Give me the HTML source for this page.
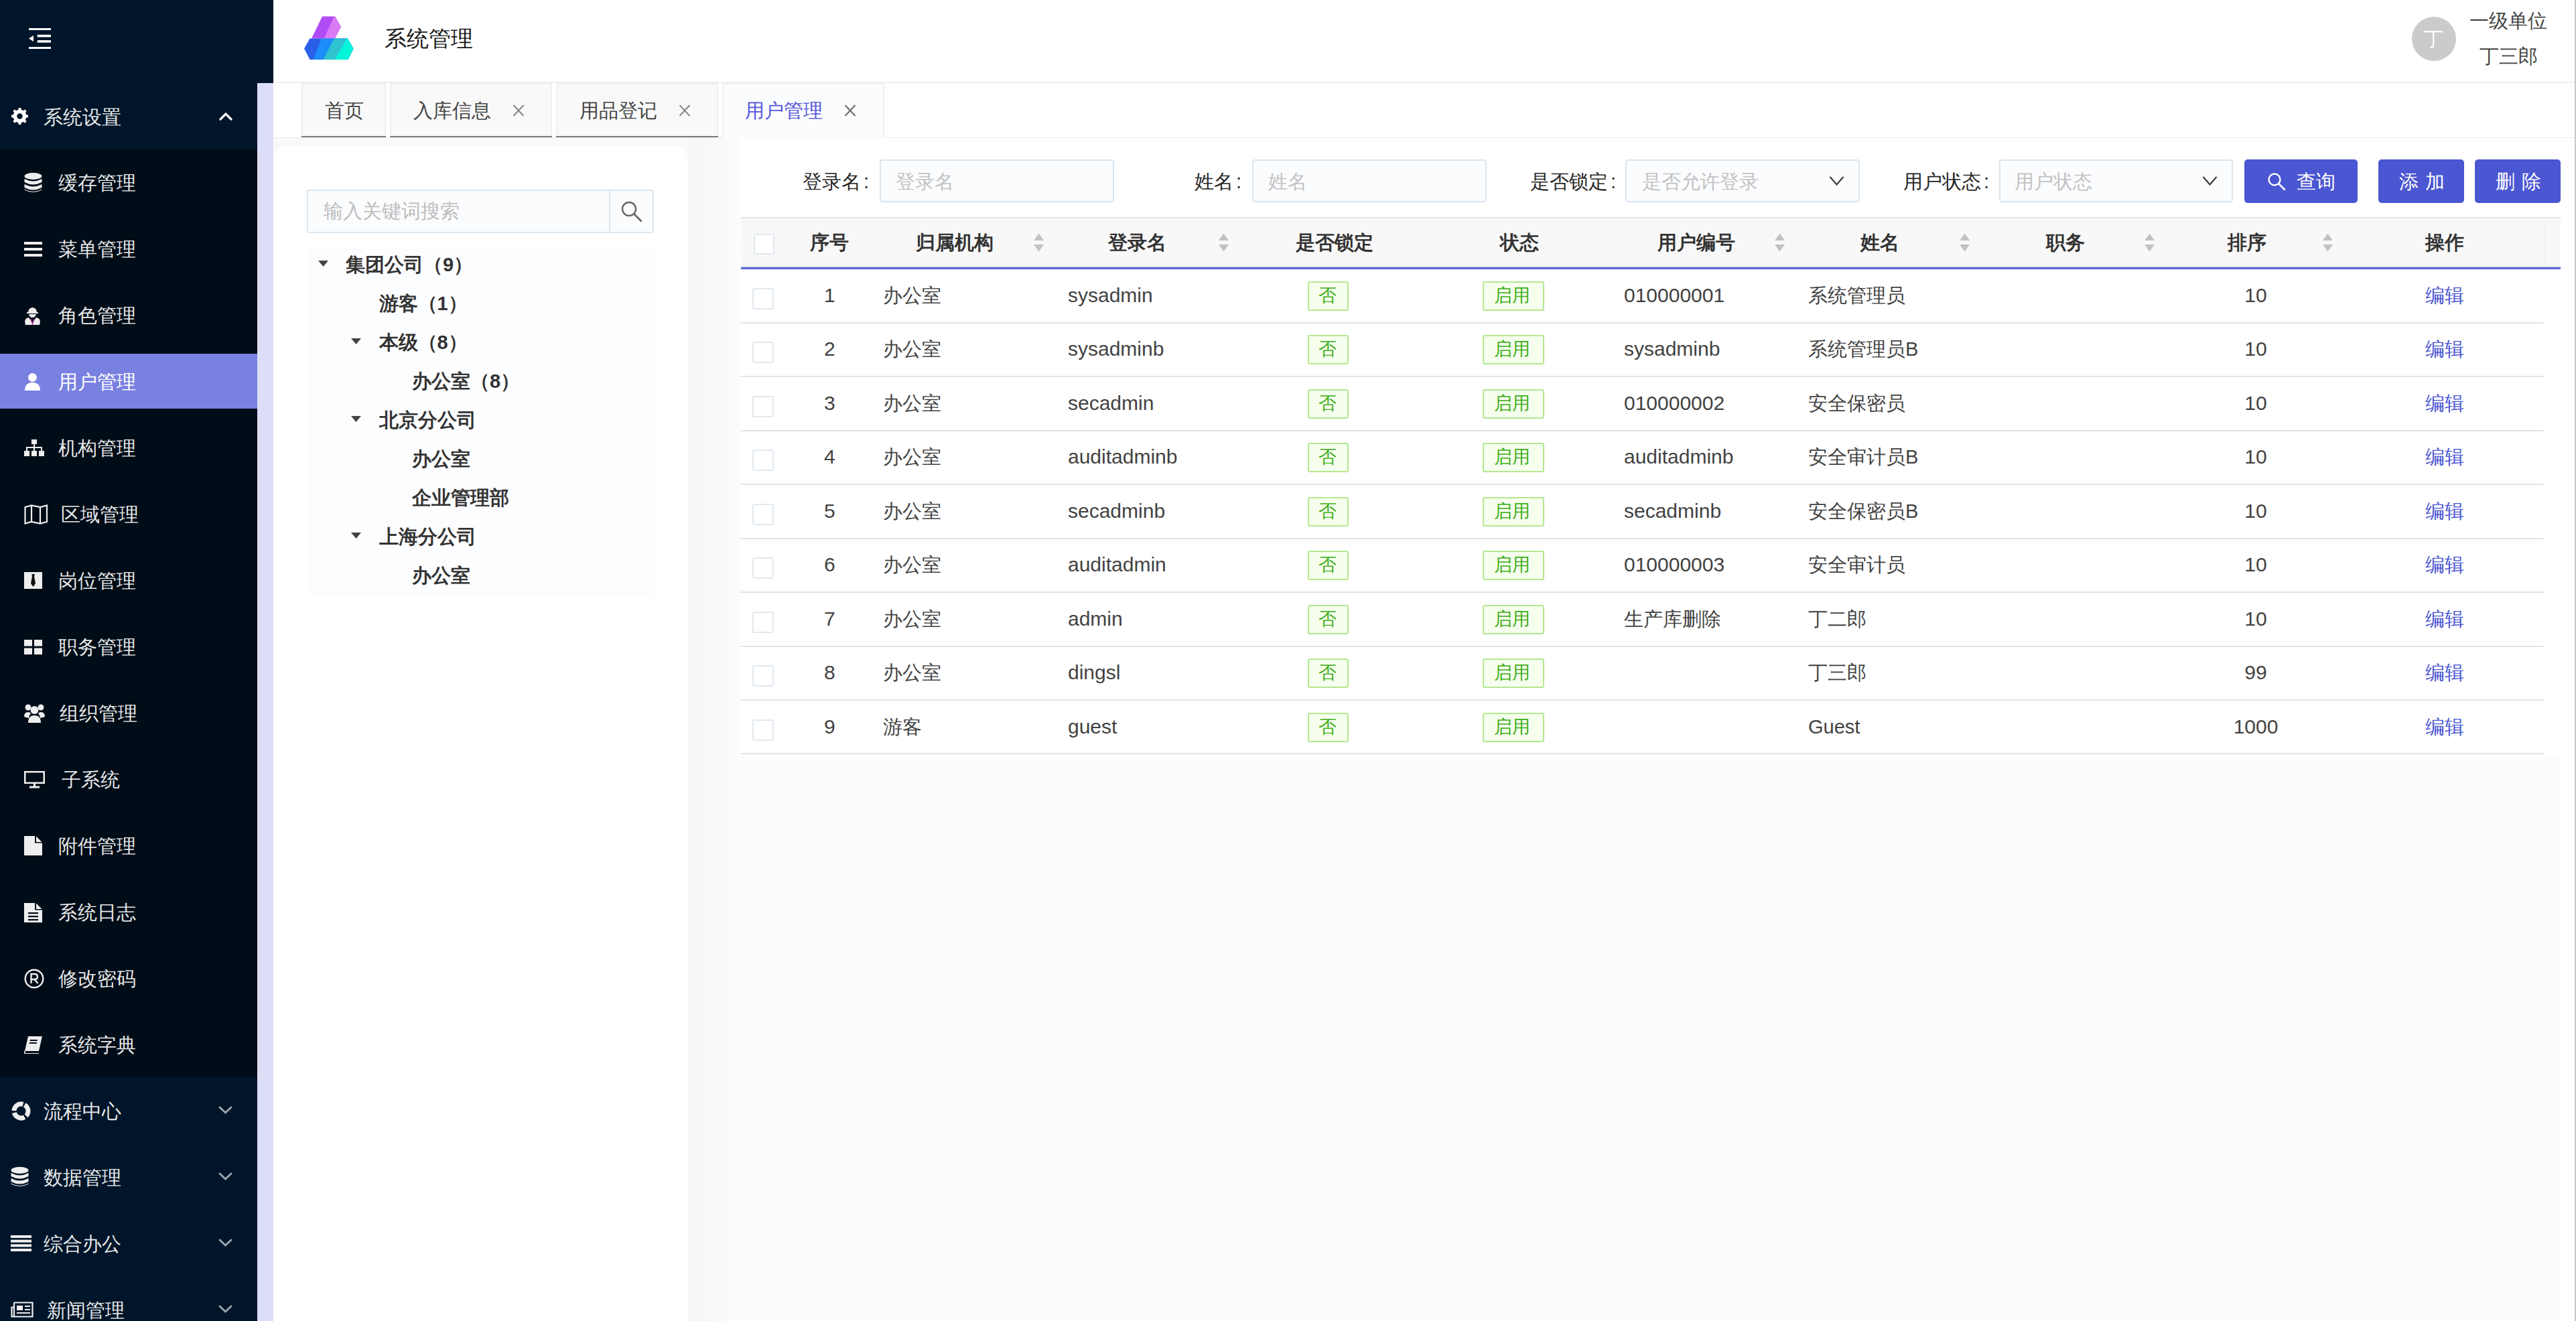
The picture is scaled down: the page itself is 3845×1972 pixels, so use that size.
<!DOCTYPE html>
<html><head><meta charset="utf-8"><title>系统管理</title>
<style>
html,body{margin:0;padding:0;width:3845px;height:1972px;overflow:hidden;background:#fff;font-family:"Liberation Sans",sans-serif;}
.a{position:absolute;display:block}
.t{position:absolute;white-space:nowrap}
</style></head><body>
<div class="a" style="left:0px;top:0px;width:408px;height:1972px;background:#001529"></div>
<div class="a" style="left:0px;top:223px;width:384px;height:1385px;background:#000c17"></div>
<div class="a" style="left:384px;top:124px;width:24px;height:1848px;background:#dcddf6"></div>
<div class="a" style="left:0px;top:528px;width:384px;height:82px;background:#7880e0"></div>
<div class="a" style="left:408px;top:0px;width:3437px;height:122px;background:#fff"></div>
<div class="a" style="left:409px;top:122px;width:3436px;height:2px;background:#efefef"></div>
<div class="a" style="left:409px;top:126px;width:3436px;height:80px;background:#fff"></div>
<div class="a" style="left:409px;top:205px;width:3436px;height:1px;background:#e8e8e8"></div>
<div class="a" style="left:408px;top:206px;width:3437px;height:1766px;background:#f9f9f9"></div>
<div class="a" style="left:408px;top:217px;width:619px;height:1755px;background:#fff;border-radius:22px 22px 0 0"></div>
<div class="a" style="left:1027px;top:206px;width:79px;height:1766px;background:linear-gradient(to right,#f6f6f6,#fcfcfc)"></div>
<div class="a" style="left:1106px;top:206px;width:2737px;height:1766px;background:#fbfcfe"></div>
<div class="a" style="left:1106px;top:206px;width:2737px;height:118px;background:#fff"></div>
<div class="a" style="left:3822px;top:206px;width:21px;height:1766px;background:#fff"></div>
<div class="a" style="left:3843px;top:0px;width:2px;height:1972px;background:#c9c9c9"></div>
<svg class="a" style="left:43px;top:42px" width="34" height="31" viewBox="0 0 34 31"><g fill="#fff"><rect x="0" y="0" width="33" height="3"/><rect x="12.7" y="9.8" width="20.3" height="3.6"/><rect x="12.7" y="18" width="20.3" height="3.6"/><rect x="0" y="28" width="33" height="3"/><path d="M0 15.5 L7 11 L7 20 Z"/></g></svg>
<div class="t" style="left:65px;top:155.0px;font-size:29px;line-height:40px;color:rgba(255,255,255,0.92);font-weight:normal;">系统设置</div>
<svg class="a" style="left:17px;top:161px" width="25" height="25" viewBox="0 0 25 25"><g fill="#fff"><path d="M12.5 0 l2.6 0 l0.8 3.4 a9.5 9.5 0 0 1 2.9 1.7 l3.3-1.1 l1.3 2.3 l-2.5 2.4 a9.5 9.5 0 0 1 0 3.4 l2.5 2.4 l-1.3 2.3 l-3.3-1.1 a9.5 9.5 0 0 1-2.9 1.7 l-0.8 3.4 l-2.6 0 z" transform="translate(-1.3 0)"/></g><circle cx="12.5" cy="12.5" r="10" fill="#fff"/><g fill="#fff"><rect x="10.5" y="0" width="4" height="25"/><rect x="0" y="10.5" width="25" height="4"/><rect x="10.5" y="0" width="4" height="25" transform="rotate(45 12.5 12.5)"/><rect x="10.5" y="0" width="4" height="25" transform="rotate(-45 12.5 12.5)"/></g><circle cx="12.5" cy="12.5" r="4.2" fill="#001529"/></svg>
<svg class="a" style="left:327px;top:167px" width="20" height="14" viewBox="0 0 20 14"><path d="M2 11 L10 3 L18 11" stroke="#fff" stroke-width="3.2" fill="none" stroke-linecap="round"/></svg>
<div class="t" style="left:87px;top:253.0px;font-size:29px;line-height:40px;color:rgba(255,255,255,0.92);font-weight:normal;">缓存管理</div>
<div class="t" style="left:87px;top:352.0px;font-size:29px;line-height:40px;color:rgba(255,255,255,0.92);font-weight:normal;">菜单管理</div>
<div class="t" style="left:87px;top:451.0px;font-size:29px;line-height:40px;color:rgba(255,255,255,0.92);font-weight:normal;">角色管理</div>
<div class="t" style="left:87px;top:550.0px;font-size:29px;line-height:40px;color:#fff;font-weight:normal;">用户管理</div>
<div class="t" style="left:87px;top:649.0px;font-size:29px;line-height:40px;color:rgba(255,255,255,0.92);font-weight:normal;">机构管理</div>
<div class="t" style="left:91px;top:748.0px;font-size:29px;line-height:40px;color:rgba(255,255,255,0.92);font-weight:normal;">区域管理</div>
<div class="t" style="left:87px;top:847.0px;font-size:29px;line-height:40px;color:rgba(255,255,255,0.92);font-weight:normal;">岗位管理</div>
<div class="t" style="left:87px;top:946.0px;font-size:29px;line-height:40px;color:rgba(255,255,255,0.92);font-weight:normal;">职务管理</div>
<div class="t" style="left:89px;top:1045.0px;font-size:29px;line-height:40px;color:rgba(255,255,255,0.92);font-weight:normal;">组织管理</div>
<div class="t" style="left:92px;top:1144.0px;font-size:29px;line-height:40px;color:rgba(255,255,255,0.92);font-weight:normal;">子系统</div>
<div class="t" style="left:87px;top:1243.0px;font-size:29px;line-height:40px;color:rgba(255,255,255,0.92);font-weight:normal;">附件管理</div>
<div class="t" style="left:87px;top:1342.0px;font-size:29px;line-height:40px;color:rgba(255,255,255,0.92);font-weight:normal;">系统日志</div>
<div class="t" style="left:87px;top:1441.0px;font-size:29px;line-height:40px;color:rgba(255,255,255,0.92);font-weight:normal;">修改密码</div>
<div class="t" style="left:87px;top:1540.0px;font-size:29px;line-height:40px;color:rgba(255,255,255,0.92);font-weight:normal;">系统字典</div>
<svg class="a" style="left:36px;top:258px" width="27" height="30" viewBox="0 0 27 30"><g fill="#eee"><ellipse cx="13.5" cy="5" rx="13" ry="5"/><path d="M0.5 9 q13 7 26 0 v5 q-13 7 -26 0z"/><path d="M0.5 17 q13 7 26 0 v5 q-13 7 -26 0z"/><path d="M0.5 24.5 q13 7 26 0 v1 q-13 7 -26 0z"/></g></svg>
<svg class="a" style="left:36px;top:361px" width="27" height="22" viewBox="0 0 27 22"><g fill="#eee"><rect x="0" y="0" width="27" height="4"/><rect x="0" y="9" width="27" height="4"/><rect x="0" y="18" width="27" height="4"/></g></svg>
<svg class="a" style="left:36px;top:457px" width="25" height="28" viewBox="0 0 25 28"><g fill="#eee"><path d="M7 5 q5.5-6 11 0 l1 4 h-13z"/><rect x="4" y="9" width="17" height="2"/><path d="M7 12 h11 q-1 5 -5.5 5 q-4.5 0 -5.5 -5z"/><path d="M2 28 q-3 -10 5 -11 l5.5 8 l5.5 -8 q8 1 5 11z"/></g><path d="M10 19 l2.5 8 l2.5 -8" stroke="#b0309a" stroke-width="1.3" fill="none"/></svg>
<svg class="a" style="left:37px;top:557px" width="23" height="26" viewBox="0 0 23 26"><g fill="#fff"><circle cx="11.5" cy="6.5" r="6.5"/><path d="M0 26 q0 -12 11.5 -12 q11.5 0 11.5 12z"/></g></svg>
<svg class="a" style="left:36px;top:656px" width="30" height="25" viewBox="0 0 30 25"><g fill="#eee"><rect x="11" y="0" width="8" height="7"/><rect x="14" y="7" width="2" height="5"/><rect x="3" y="11" width="24" height="2"/><rect x="3" y="11" width="2" height="6"/><rect x="25" y="11" width="2" height="6"/><rect x="14" y="11" width="2" height="6"/><rect x="0" y="17" width="8" height="8"/><rect x="11" y="17" width="8" height="8"/><rect x="22" y="17" width="8" height="8"/></g></svg>
<svg class="a" style="left:36px;top:753px" width="36" height="30" viewBox="0 0 36 30"><g fill="none" stroke="#eee" stroke-width="2.2"><path d="M1.5 4 L11 1.5 L24 4 L34 1.5 V26 L24 28.5 L11 26 L1.5 28.5 Z"/><path d="M11 1.5 V26 M24 4 V28.5"/></g></svg>
<svg class="a" style="left:36px;top:854px" width="27" height="25" viewBox="0 0 27 25"><rect x="0" y="0" width="27" height="25" fill="#eee"/><path d="M11 3 h5 l-1 3 l2 11 l-3.5 5 l-3.5 -5 l2 -11z" fill="#111"/></svg>
<svg class="a" style="left:36px;top:955px" width="27" height="22" viewBox="0 0 27 22"><g fill="#eee"><rect x="0" y="0" width="12" height="9.5"/><rect x="15" y="0" width="12" height="9.5"/><rect x="0" y="12.5" width="12" height="9.5"/><rect x="15" y="12.5" width="12" height="9.5"/></g></svg>
<svg class="a" style="left:36px;top:1051px" width="31" height="28" viewBox="0 0 31 28"><g fill="#eee"><circle cx="6" cy="5" r="4.5"/><circle cx="25" cy="5" r="4.5"/><circle cx="15.5" cy="9" r="6"/><path d="M0 19 q0-7 6-7 q3 0 4 2 q-3 3 -3 7z"/><path d="M31 19 q0-7 -6-7 q-3 0 -4 2 q3 3 3 7z"/><path d="M6 28 q0 -11 9.5 -11 q9.5 0 9.5 11z"/></g></svg>
<svg class="a" style="left:36px;top:1151px" width="31" height="26" viewBox="0 0 31 26"><g fill="#eee"><path d="M0 0 h31 v19 h-31z M2.5 2.5 v14 h26 v-14z" fill-rule="evenodd"/><rect x="14" y="19" width="3" height="4"/><rect x="8" y="22.5" width="15" height="3"/></g></svg>
<svg class="a" style="left:36px;top:1248px" width="27" height="29" viewBox="0 0 27 29"><path d="M0 0 H16 V10.5 H27 V29 H0 Z" fill="#eee"/><path d="M18 0.5 L26.5 9 H18 Z" fill="#eee"/></svg>
<svg class="a" style="left:36px;top:1348px" width="27" height="29" viewBox="0 0 27 29"><path d="M0 0 H16 V10.5 H27 V29 H0 Z" fill="#eee"/><path d="M18 0.5 L26.5 9 H18 Z" fill="#eee"/><g fill="#000c17"><rect x="6" y="14" width="15" height="2.2"/><rect x="6" y="19" width="15" height="2.2"/><rect x="6" y="24" width="15" height="2.2"/></g></svg>
<svg class="a" style="left:36px;top:1446px" width="30" height="30" viewBox="0 0 30 30"><circle cx="15" cy="15" r="13.3" stroke="#eee" stroke-width="2.4" fill="none"/><path d="M10.5 22 V8 h5 q4.5 0 4.5 4 q0 4 -4.5 4 h-5 M15.5 16 L20.5 22" stroke="#eee" stroke-width="2.4" fill="none"/></svg>
<svg class="a" style="left:36px;top:1547px" width="27" height="26" viewBox="0 0 27 26"><path d="M6 0 h21 l-5 22 h-21 z" fill="#eee"/><path d="M1 22 q-2 4 3 4 h18" stroke="#eee" stroke-width="2" fill="none"/><g fill="#000c17"><rect x="10" y="5" width="11" height="2" transform="skewX(-12)"/><rect x="10" y="9" width="11" height="2" transform="skewX(-12)"/></g></svg>
<div class="t" style="left:65px;top:1639.0px;font-size:29px;line-height:40px;color:rgba(255,255,255,0.92);font-weight:normal;">流程中心</div>
<svg class="a" style="left:326px;top:1650px" width="21" height="14" viewBox="0 0 21 14"><path d="M2 3 L10.5 11 L19 3" stroke="#9aa3ad" stroke-width="3" fill="none" stroke-linecap="round"/></svg>
<div class="t" style="left:65px;top:1738.0px;font-size:29px;line-height:40px;color:rgba(255,255,255,0.92);font-weight:normal;">数据管理</div>
<svg class="a" style="left:326px;top:1749px" width="21" height="14" viewBox="0 0 21 14"><path d="M2 3 L10.5 11 L19 3" stroke="#9aa3ad" stroke-width="3" fill="none" stroke-linecap="round"/></svg>
<div class="t" style="left:65px;top:1837.0px;font-size:29px;line-height:40px;color:rgba(255,255,255,0.92);font-weight:normal;">综合办公</div>
<svg class="a" style="left:326px;top:1848px" width="21" height="14" viewBox="0 0 21 14"><path d="M2 3 L10.5 11 L19 3" stroke="#9aa3ad" stroke-width="3" fill="none" stroke-linecap="round"/></svg>
<div class="t" style="left:70px;top:1936.0px;font-size:29px;line-height:40px;color:rgba(255,255,255,0.92);font-weight:normal;">新闻管理</div>
<svg class="a" style="left:326px;top:1947px" width="21" height="14" viewBox="0 0 21 14"><path d="M2 3 L10.5 11 L19 3" stroke="#9aa3ad" stroke-width="3" fill="none" stroke-linecap="round"/></svg>
<svg class="a" style="left:16px;top:1644px" width="31" height="29" viewBox="0 0 31 29"><circle cx="15.5" cy="14.5" r="10.5" stroke="#eee" stroke-width="7" fill="none" stroke-dasharray="19 3" transform="rotate(-60 15.5 14.5)"/></svg>
<svg class="a" style="left:16px;top:1742px" width="27" height="30" viewBox="0 0 27 30"><g fill="#eee"><ellipse cx="13.5" cy="5" rx="13" ry="5"/><path d="M0.5 9 q13 7 26 0 v5 q-13 7 -26 0z"/><path d="M0.5 17 q13 7 26 0 v5 q-13 7 -26 0z"/><path d="M0.5 24.5 q13 7 26 0 v1 q-13 7 -26 0z"/></g></svg>
<svg class="a" style="left:16px;top:1844px" width="31" height="24" viewBox="0 0 31 24"><g fill="#eee"><rect x="0" y="0" width="31" height="4"/><rect x="0" y="6.7" width="31" height="4"/><rect x="0" y="13.4" width="31" height="4"/><rect x="0" y="20" width="31" height="4"/></g></svg>
<svg class="a" style="left:16px;top:1943px" width="34" height="24" viewBox="0 0 34 24"><g fill="none" stroke="#eee" stroke-width="2.2"><path d="M5 1.5 h27.5 v21 h-31 v-14 h3.5"/><path d="M5 1.5 v21"/></g><g fill="#eee"><rect x="9" y="6" width="9" height="7"/><rect x="21" y="6" width="8" height="2"/><rect x="21" y="11" width="8" height="2"/><rect x="9" y="16" width="20" height="2"/></g></svg>
<svg class="a" style="left:454px;top:24px" width="75" height="66" viewBox="0 0 75 66"><defs><clipPath id="cpU"><path d="M11 33.5 L27 0.5 H46 L55 16 L46 33.5 Z"/></clipPath><clipPath id="cpL"><path d="M0 48.5 L8.5 33.5 H65 L73.5 48.5 L65.5 65 H8.5 Z"/></clipPath></defs>
<g clip-path="url(#cpU)"><rect x="0" y="0" width="80" height="40" fill="#b04cf6"/><path d="M44.75 0.5 L29.75 33.5 H80 V0 Z" fill="#dc7bf6"/></g>
<g clip-path="url(#cpL)"><rect x="-5" y="30" width="90" height="40" fill="#2a5fe8"/><path d="M26 33.5 L13.5 65 H90 V30 Z" fill="#1b8cf8"/><path d="M44.75 33.5 L28.5 65 H90 V30 Z" fill="#2fc3d0"/><path d="M63.5 33.5 L46 65 H90 V30 Z" fill="#03f5da"/></g></svg>
<div class="t" style="left:574px;top:36.0px;font-size:33px;line-height:44px;color:#1a1a1a;font-weight:normal;">系统管理</div>
<div class="a" style="left:3600px;top:25px;width:66px;height:66px;background:#cbcbcb;border-radius:50%"></div>
<div class="t" style="left:3618px;top:38.0px;font-size:29px;line-height:40px;color:#fff;font-weight:normal;">丁</div>
<div class="t" style="left:3686px;top:11.0px;font-size:29px;line-height:40px;color:#444;font-weight:normal;">一级单位</div>
<div class="t" style="left:3701px;top:64.0px;font-size:29px;line-height:40px;color:#444;font-weight:normal;">丁三郎</div>
<div class="a" style="left:450px;top:124px;width:126px;height:81px;background:#f9f9f9;box-sizing:border-box;border:2px solid #efefef;border-bottom:none"></div>
<div class="a" style="left:450px;top:203px;width:126px;height:2px;background:#7a7a7a"></div>
<div class="a" style="left:582px;top:124px;width:242px;height:81px;background:#f9f9f9;box-sizing:border-box;border:2px solid #efefef;border-bottom:none"></div>
<div class="a" style="left:582px;top:203px;width:242px;height:2px;background:#7a7a7a"></div>
<div class="a" style="left:830px;top:124px;width:242px;height:81px;background:#f9f9f9;box-sizing:border-box;border:2px solid #efefef;border-bottom:none"></div>
<div class="a" style="left:830px;top:203px;width:242px;height:2px;background:#7a7a7a"></div>
<div class="a" style="left:1078px;top:124px;width:242px;height:82px;background:#fbfcfe;box-sizing:border-box;border:2px solid #efefef;border-bottom:none"></div>
<div class="t" style="left:485px;top:145.0px;font-size:29px;line-height:40px;color:#444;font-weight:normal;">首页</div>
<div class="t" style="left:617px;top:145.0px;font-size:29px;line-height:40px;color:#444;font-weight:normal;">入库信息</div>
<div class="t" style="left:865px;top:145.0px;font-size:29px;line-height:40px;color:#444;font-weight:normal;">用品登记</div>
<div class="t" style="left:1112px;top:145.0px;font-size:29px;line-height:40px;color:#5458d8;font-weight:normal;">用户管理</div>
<svg class="a" style="left:765px;top:155px" width="18" height="20" viewBox="0 0 18 20"><path d="M1.5 2 L16.5 18 M16.5 2 L1.5 18" stroke="#8c8c8c" stroke-width="2.2"/></svg>
<svg class="a" style="left:1013px;top:155px" width="18" height="20" viewBox="0 0 18 20"><path d="M1.5 2 L16.5 18 M16.5 2 L1.5 18" stroke="#8c8c8c" stroke-width="2.2"/></svg>
<svg class="a" style="left:1260px;top:155px" width="18" height="20" viewBox="0 0 18 20"><path d="M1.5 2 L16.5 18 M16.5 2 L1.5 18" stroke="#707070" stroke-width="2.2"/></svg>
<div class="a" style="left:458px;top:283px;width:518px;height:65px;background:#fbfcfe;box-sizing:border-box;border:2px solid #dbe5ee;border-radius:4px"></div>
<div class="a" style="left:909px;top:284px;width:2px;height:63px;background:#dbe5ee"></div>
<div class="t" style="left:483px;top:295.0px;font-size:29px;line-height:40px;color:#bdbdbd;font-weight:normal;">输入关键词搜索</div>
<svg class="a" style="left:926px;top:299px" width="34" height="34" viewBox="0 0 34 34"><circle cx="13" cy="13" r="10" stroke="#666" stroke-width="2.4" fill="none"/><path d="M20.5 20.5 L31 31" stroke="#666" stroke-width="2.6" stroke-linecap="round"/></svg>
<div class="a" style="left:458px;top:369px;width:520px;height:520px;background:#fcfdff"></div>
<div class="t" style="left:516.0px;top:374.5px;font-size:29px;line-height:40px;color:#333;font-weight:bold;">集团公司（9）</div>
<svg class="a" style="left:475px;top:389px" width="15" height="10" viewBox="0 0 15 10"><path d="M0 0 H15 L7.5 9 Z" fill="#444"/></svg>
<div class="t" style="left:565.5px;top:432.5px;font-size:29px;line-height:40px;color:#333;font-weight:bold;">游客（1）</div>
<div class="t" style="left:565.5px;top:490.5px;font-size:29px;line-height:40px;color:#333;font-weight:bold;">本级（8）</div>
<svg class="a" style="left:524px;top:505px" width="15" height="10" viewBox="0 0 15 10"><path d="M0 0 H15 L7.5 9 Z" fill="#444"/></svg>
<div class="t" style="left:615.0px;top:548.5px;font-size:29px;line-height:40px;color:#333;font-weight:bold;">办公室（8）</div>
<div class="t" style="left:565.5px;top:606.5px;font-size:29px;line-height:40px;color:#333;font-weight:bold;">北京分公司</div>
<svg class="a" style="left:524px;top:621px" width="15" height="10" viewBox="0 0 15 10"><path d="M0 0 H15 L7.5 9 Z" fill="#444"/></svg>
<div class="t" style="left:615.0px;top:664.5px;font-size:29px;line-height:40px;color:#333;font-weight:bold;">办公室</div>
<div class="t" style="left:615.0px;top:722.5px;font-size:29px;line-height:40px;color:#333;font-weight:bold;">企业管理部</div>
<div class="t" style="left:565.5px;top:780.5px;font-size:29px;line-height:40px;color:#333;font-weight:bold;">上海分公司</div>
<svg class="a" style="left:524px;top:795px" width="15" height="10" viewBox="0 0 15 10"><path d="M0 0 H15 L7.5 9 Z" fill="#444"/></svg>
<div class="t" style="left:615.0px;top:838.5px;font-size:29px;line-height:40px;color:#333;font-weight:bold;">办公室</div>
<div class="t" style="left:1198px;top:251.0px;font-size:29px;line-height:40px;color:#262626;font-weight:normal;letter-spacing:0px">登录名<span style="margin-left:4px">:</span></div>
<div class="a" style="left:1313px;top:238px;width:350px;height:64px;background:#fbfcfe;box-sizing:border-box;border:2px solid #dbe5ee;border-radius:4px"></div>
<div class="t" style="left:1337px;top:251.0px;font-size:29px;line-height:40px;color:#c2c2c2;font-weight:normal;">登录名</div>
<div class="t" style="left:1783px;top:251.0px;font-size:29px;line-height:40px;color:#262626;font-weight:normal;">姓名<span style="margin-left:4px">:</span></div>
<div class="a" style="left:1869px;top:238px;width:350px;height:64px;background:#fbfcfe;box-sizing:border-box;border:2px solid #dbe5ee;border-radius:4px"></div>
<div class="t" style="left:1893px;top:251.0px;font-size:29px;line-height:40px;color:#c2c2c2;font-weight:normal;">姓名</div>
<div class="t" style="left:2284px;top:251.0px;font-size:29px;line-height:40px;color:#262626;font-weight:normal;">是否锁定<span style="margin-left:4px">:</span></div>
<div class="a" style="left:2426px;top:238px;width:350px;height:64px;background:#fbfcfe;box-sizing:border-box;border:2px solid #dbe5ee;border-radius:4px"></div>
<div class="t" style="left:2451px;top:251.0px;font-size:29px;line-height:40px;color:#c2c2c2;font-weight:normal;">是否允许登录</div>
<div class="t" style="left:2841px;top:251.0px;font-size:29px;line-height:40px;color:#262626;font-weight:normal;">用户状态<span style="margin-left:4px">:</span></div>
<div class="a" style="left:2984px;top:238px;width:349px;height:64px;background:#fbfcfe;box-sizing:border-box;border:2px solid #dbe5ee;border-radius:4px"></div>
<div class="t" style="left:3007px;top:251.0px;font-size:29px;line-height:40px;color:#c2c2c2;font-weight:normal;">用户状态</div>
<svg class="a" style="left:2730px;top:262px" width="23" height="16" viewBox="0 0 23 16"><path d="M1.5 2 L11.5 13.5 L21.5 2" stroke="#444" stroke-width="2.4" fill="none"/></svg>
<svg class="a" style="left:3287px;top:262px" width="23" height="16" viewBox="0 0 23 16"><path d="M1.5 2 L11.5 13.5 L21.5 2" stroke="#444" stroke-width="2.4" fill="none"/></svg>
<div class="a" style="left:3350px;top:238px;width:169px;height:65px;background:#4b56d2;border-radius:5px"></div>
<svg class="a" style="left:3384px;top:257px" width="28" height="28" viewBox="0 0 28 28"><circle cx="11" cy="11" r="8.5" stroke="#fff" stroke-width="2.4" fill="none"/><path d="M17 17 L26 26" stroke="#fff" stroke-width="2.6" stroke-linecap="round"/></svg>
<div class="t" style="left:3428px;top:251.0px;font-size:29px;line-height:40px;color:#fff;font-weight:normal;">查询</div>
<div class="a" style="left:3550px;top:238px;width:128px;height:65px;background:#4b56d2;border-radius:5px"></div>
<div class="t" style="left:3581px;top:251.0px;font-size:29px;line-height:40px;color:#fff;font-weight:normal;letter-spacing:1px">添 加</div>
<div class="a" style="left:3694px;top:238px;width:128px;height:65px;background:#4b56d2;border-radius:5px"></div>
<div class="t" style="left:3725px;top:251.0px;font-size:29px;line-height:40px;color:#fff;font-weight:normal;letter-spacing:1px">删 除</div>
<div class="a" style="left:1106px;top:324px;width:2716px;height:77px;background:#f8f8f8;border-top:2px solid #e6e6e6;box-sizing:border-box"></div>
<div class="a" style="left:3797px;top:324px;width:1px;height:77px;background:#ececec"></div>
<div class="a" style="left:1106px;top:397px;width:2716px;height:2px;background:#e0e0e0"></div>
<div class="a" style="left:1106px;top:399px;width:2716px;height:2.5px;background:#5a62dc"></div>
<div class="a" style="left:1125px;top:349px;width:31px;height:31px;background:#fff;box-sizing:border-box;border:2px solid #e1e9f0;border-radius:3px"></div>
<div class="t" style="left:1209px;top:342.0px;font-size:29px;line-height:40px;color:#333;font-weight:bold;">序号</div>
<div class="t" style="left:1367px;top:342.0px;font-size:29px;line-height:40px;color:#333;font-weight:bold;">归属机构</div>
<svg class="a" style="left:1543px;top:348px" width="15" height="28" viewBox="0 0 15 28"><path d="M7.5 0.5 L15 11 H0 Z M7.5 27.5 L15 17 H0 Z" fill="#c2c2c2"/></svg>
<div class="t" style="left:1654px;top:342.0px;font-size:29px;line-height:40px;color:#333;font-weight:bold;">登录名</div>
<svg class="a" style="left:1819px;top:348px" width="15" height="28" viewBox="0 0 15 28"><path d="M7.5 0.5 L15 11 H0 Z M7.5 27.5 L15 17 H0 Z" fill="#c2c2c2"/></svg>
<div class="t" style="left:1934px;top:342.0px;font-size:29px;line-height:40px;color:#333;font-weight:bold;">是否锁定</div>
<div class="t" style="left:2239px;top:342.0px;font-size:29px;line-height:40px;color:#333;font-weight:bold;">状态</div>
<div class="t" style="left:2474px;top:342.0px;font-size:29px;line-height:40px;color:#333;font-weight:bold;">用户编号</div>
<svg class="a" style="left:2649px;top:348px" width="15" height="28" viewBox="0 0 15 28"><path d="M7.5 0.5 L15 11 H0 Z M7.5 27.5 L15 17 H0 Z" fill="#c2c2c2"/></svg>
<div class="t" style="left:2777px;top:342.0px;font-size:29px;line-height:40px;color:#333;font-weight:bold;">姓名</div>
<svg class="a" style="left:2925px;top:348px" width="15" height="28" viewBox="0 0 15 28"><path d="M7.5 0.5 L15 11 H0 Z M7.5 27.5 L15 17 H0 Z" fill="#c2c2c2"/></svg>
<div class="t" style="left:3054px;top:342.0px;font-size:29px;line-height:40px;color:#333;font-weight:bold;">职务</div>
<svg class="a" style="left:3201px;top:348px" width="15" height="28" viewBox="0 0 15 28"><path d="M7.5 0.5 L15 11 H0 Z M7.5 27.5 L15 17 H0 Z" fill="#c2c2c2"/></svg>
<div class="t" style="left:3325px;top:342.0px;font-size:29px;line-height:40px;color:#333;font-weight:bold;">排序</div>
<svg class="a" style="left:3467px;top:348px" width="15" height="28" viewBox="0 0 15 28"><path d="M7.5 0.5 L15 11 H0 Z M7.5 27.5 L15 17 H0 Z" fill="#c2c2c2"/></svg>
<div class="t" style="left:3620px;top:342.0px;font-size:29px;line-height:40px;color:#333;font-weight:bold;">操作</div>
<div class="a" style="left:1106px;top:402px;width:2716px;height:80px;background:#fff"></div>
<div class="a" style="left:1106px;top:481px;width:2716px;height:81px;background:#fff"></div>
<div class="a" style="left:1106px;top:562px;width:2716px;height:81px;background:#fff"></div>
<div class="a" style="left:1106px;top:642px;width:2716px;height:81px;background:#fff"></div>
<div class="a" style="left:1106px;top:723px;width:2716px;height:81px;background:#fff"></div>
<div class="a" style="left:1106px;top:803px;width:2716px;height:81px;background:#fff"></div>
<div class="a" style="left:1106px;top:884px;width:2716px;height:81px;background:#fff"></div>
<div class="a" style="left:1106px;top:964px;width:2716px;height:81px;background:#fff"></div>
<div class="a" style="left:1106px;top:1045px;width:2716px;height:81px;background:#fff"></div>
<div class="a" style="left:1106px;top:481px;width:2691px;height:2px;background:#e3e3e3"></div>
<div class="a" style="left:1106px;top:561px;width:2691px;height:2px;background:#e3e3e3"></div>
<div class="a" style="left:1106px;top:642px;width:2691px;height:2px;background:#e3e3e3"></div>
<div class="a" style="left:1106px;top:722px;width:2691px;height:2px;background:#e3e3e3"></div>
<div class="a" style="left:1106px;top:803px;width:2691px;height:2px;background:#e3e3e3"></div>
<div class="a" style="left:1106px;top:883px;width:2691px;height:2px;background:#e3e3e3"></div>
<div class="a" style="left:1106px;top:964px;width:2691px;height:2px;background:#e3e3e3"></div>
<div class="a" style="left:1106px;top:1044px;width:2691px;height:2px;background:#e3e3e3"></div>
<div class="a" style="left:1106px;top:1124px;width:2691px;height:2px;background:#e3e3e3"></div>
<div class="a" style="left:1123px;top:430px;width:32px;height:32px;background:#fff;box-sizing:border-box;border:2px solid #e1e9f0;border-radius:3px"></div>
<div class="t c30" style="left:1230px;top:421.0px;font-size:30px;line-height:40px;color:#424242;font-weight:normal;width:0;overflow:visible">1</div>
<div class="t" style="left:1318px;top:421.0px;font-size:29px;line-height:40px;color:#424242;font-weight:normal;">办公室</div>
<div class="t" style="left:1594px;top:421.0px;font-size:30px;line-height:40px;color:#424242;font-weight:normal;">sysadmin</div>
<div class="a" style="left:1952px;top:420px;width:61px;height:44px;background:#f6ffed;box-sizing:border-box;border:2px solid #b4e890;border-radius:3px"></div>
<div class="t" style="left:1968px;top:421.0px;font-size:27px;line-height:40px;color:#3fae20;font-weight:normal;">否</div>
<div class="a" style="left:2213px;top:420px;width:92px;height:44px;background:#f6ffed;box-sizing:border-box;border:2px solid #b4e890;border-radius:3px"></div>
<div class="t" style="left:2230px;top:421.0px;font-size:27px;line-height:40px;color:#3fae20;font-weight:normal;">启用</div>
<div class="t" style="left:2424px;top:421.0px;font-size:30px;line-height:40px;color:#424242;font-weight:normal;">010000001</div>
<div class="t" style="left:2699px;top:421.0px;font-size:29px;line-height:40px;color:#424242;font-weight:normal;">系统管理员</div>
<div class="t" style="left:3267px;top:421.0px;font-size:30px;line-height:40px;color:#424242;font-weight:normal;width:200px;text-align:center">10</div>
<div class="t" style="left:3620px;top:421.0px;font-size:29px;line-height:40px;color:#4b56d2;font-weight:normal;">编辑</div>
<div class="a" style="left:1123px;top:510px;width:32px;height:32px;background:#fff;box-sizing:border-box;border:2px solid #e1e9f0;border-radius:3px"></div>
<div class="t c30" style="left:1230px;top:501.4px;font-size:30px;line-height:40px;color:#424242;font-weight:normal;width:0;overflow:visible">2</div>
<div class="t" style="left:1318px;top:501.4px;font-size:29px;line-height:40px;color:#424242;font-weight:normal;">办公室</div>
<div class="t" style="left:1594px;top:501.4px;font-size:30px;line-height:40px;color:#424242;font-weight:normal;">sysadminb</div>
<div class="a" style="left:1952px;top:500px;width:61px;height:44px;background:#f6ffed;box-sizing:border-box;border:2px solid #b4e890;border-radius:3px"></div>
<div class="t" style="left:1968px;top:501.4px;font-size:27px;line-height:40px;color:#3fae20;font-weight:normal;">否</div>
<div class="a" style="left:2213px;top:500px;width:92px;height:44px;background:#f6ffed;box-sizing:border-box;border:2px solid #b4e890;border-radius:3px"></div>
<div class="t" style="left:2230px;top:501.4px;font-size:27px;line-height:40px;color:#3fae20;font-weight:normal;">启用</div>
<div class="t" style="left:2424px;top:501.4px;font-size:30px;line-height:40px;color:#424242;font-weight:normal;">sysadminb</div>
<div class="t" style="left:2699px;top:501.4px;font-size:29px;line-height:40px;color:#424242;font-weight:normal;">系统管理员B</div>
<div class="t" style="left:3267px;top:501.4px;font-size:30px;line-height:40px;color:#424242;font-weight:normal;width:200px;text-align:center">10</div>
<div class="t" style="left:3620px;top:501.4px;font-size:29px;line-height:40px;color:#4b56d2;font-weight:normal;">编辑</div>
<div class="a" style="left:1123px;top:591px;width:32px;height:32px;background:#fff;box-sizing:border-box;border:2px solid #e1e9f0;border-radius:3px"></div>
<div class="t c30" style="left:1230px;top:581.9px;font-size:30px;line-height:40px;color:#424242;font-weight:normal;width:0;overflow:visible">3</div>
<div class="t" style="left:1318px;top:581.9px;font-size:29px;line-height:40px;color:#424242;font-weight:normal;">办公室</div>
<div class="t" style="left:1594px;top:581.9px;font-size:30px;line-height:40px;color:#424242;font-weight:normal;">secadmin</div>
<div class="a" style="left:1952px;top:581px;width:61px;height:44px;background:#f6ffed;box-sizing:border-box;border:2px solid #b4e890;border-radius:3px"></div>
<div class="t" style="left:1968px;top:581.9px;font-size:27px;line-height:40px;color:#3fae20;font-weight:normal;">否</div>
<div class="a" style="left:2213px;top:581px;width:92px;height:44px;background:#f6ffed;box-sizing:border-box;border:2px solid #b4e890;border-radius:3px"></div>
<div class="t" style="left:2230px;top:581.9px;font-size:27px;line-height:40px;color:#3fae20;font-weight:normal;">启用</div>
<div class="t" style="left:2424px;top:581.9px;font-size:30px;line-height:40px;color:#424242;font-weight:normal;">010000002</div>
<div class="t" style="left:2699px;top:581.9px;font-size:29px;line-height:40px;color:#424242;font-weight:normal;">安全保密员</div>
<div class="t" style="left:3267px;top:581.9px;font-size:30px;line-height:40px;color:#424242;font-weight:normal;width:200px;text-align:center">10</div>
<div class="t" style="left:3620px;top:581.9px;font-size:29px;line-height:40px;color:#4b56d2;font-weight:normal;">编辑</div>
<div class="a" style="left:1123px;top:671px;width:32px;height:32px;background:#fff;box-sizing:border-box;border:2px solid #e1e9f0;border-radius:3px"></div>
<div class="t c30" style="left:1230px;top:662.3px;font-size:30px;line-height:40px;color:#424242;font-weight:normal;width:0;overflow:visible">4</div>
<div class="t" style="left:1318px;top:662.3px;font-size:29px;line-height:40px;color:#424242;font-weight:normal;">办公室</div>
<div class="t" style="left:1594px;top:662.3px;font-size:30px;line-height:40px;color:#424242;font-weight:normal;">auditadminb</div>
<div class="a" style="left:1952px;top:661px;width:61px;height:44px;background:#f6ffed;box-sizing:border-box;border:2px solid #b4e890;border-radius:3px"></div>
<div class="t" style="left:1968px;top:662.3px;font-size:27px;line-height:40px;color:#3fae20;font-weight:normal;">否</div>
<div class="a" style="left:2213px;top:661px;width:92px;height:44px;background:#f6ffed;box-sizing:border-box;border:2px solid #b4e890;border-radius:3px"></div>
<div class="t" style="left:2230px;top:662.3px;font-size:27px;line-height:40px;color:#3fae20;font-weight:normal;">启用</div>
<div class="t" style="left:2424px;top:662.3px;font-size:30px;line-height:40px;color:#424242;font-weight:normal;">auditadminb</div>
<div class="t" style="left:2699px;top:662.3px;font-size:29px;line-height:40px;color:#424242;font-weight:normal;">安全审计员B</div>
<div class="t" style="left:3267px;top:662.3px;font-size:30px;line-height:40px;color:#424242;font-weight:normal;width:200px;text-align:center">10</div>
<div class="t" style="left:3620px;top:662.3px;font-size:29px;line-height:40px;color:#4b56d2;font-weight:normal;">编辑</div>
<div class="a" style="left:1123px;top:752px;width:32px;height:32px;background:#fff;box-sizing:border-box;border:2px solid #e1e9f0;border-radius:3px"></div>
<div class="t c30" style="left:1230px;top:742.8px;font-size:30px;line-height:40px;color:#424242;font-weight:normal;width:0;overflow:visible">5</div>
<div class="t" style="left:1318px;top:742.8px;font-size:29px;line-height:40px;color:#424242;font-weight:normal;">办公室</div>
<div class="t" style="left:1594px;top:742.8px;font-size:30px;line-height:40px;color:#424242;font-weight:normal;">secadminb</div>
<div class="a" style="left:1952px;top:742px;width:61px;height:44px;background:#f6ffed;box-sizing:border-box;border:2px solid #b4e890;border-radius:3px"></div>
<div class="t" style="left:1968px;top:742.8px;font-size:27px;line-height:40px;color:#3fae20;font-weight:normal;">否</div>
<div class="a" style="left:2213px;top:742px;width:92px;height:44px;background:#f6ffed;box-sizing:border-box;border:2px solid #b4e890;border-radius:3px"></div>
<div class="t" style="left:2230px;top:742.8px;font-size:27px;line-height:40px;color:#3fae20;font-weight:normal;">启用</div>
<div class="t" style="left:2424px;top:742.8px;font-size:30px;line-height:40px;color:#424242;font-weight:normal;">secadminb</div>
<div class="t" style="left:2699px;top:742.8px;font-size:29px;line-height:40px;color:#424242;font-weight:normal;">安全保密员B</div>
<div class="t" style="left:3267px;top:742.8px;font-size:30px;line-height:40px;color:#424242;font-weight:normal;width:200px;text-align:center">10</div>
<div class="t" style="left:3620px;top:742.8px;font-size:29px;line-height:40px;color:#4b56d2;font-weight:normal;">编辑</div>
<div class="a" style="left:1123px;top:832px;width:32px;height:32px;background:#fff;box-sizing:border-box;border:2px solid #e1e9f0;border-radius:3px"></div>
<div class="t c30" style="left:1230px;top:823.2px;font-size:30px;line-height:40px;color:#424242;font-weight:normal;width:0;overflow:visible">6</div>
<div class="t" style="left:1318px;top:823.2px;font-size:29px;line-height:40px;color:#424242;font-weight:normal;">办公室</div>
<div class="t" style="left:1594px;top:823.2px;font-size:30px;line-height:40px;color:#424242;font-weight:normal;">auditadmin</div>
<div class="a" style="left:1952px;top:822px;width:61px;height:44px;background:#f6ffed;box-sizing:border-box;border:2px solid #b4e890;border-radius:3px"></div>
<div class="t" style="left:1968px;top:823.2px;font-size:27px;line-height:40px;color:#3fae20;font-weight:normal;">否</div>
<div class="a" style="left:2213px;top:822px;width:92px;height:44px;background:#f6ffed;box-sizing:border-box;border:2px solid #b4e890;border-radius:3px"></div>
<div class="t" style="left:2230px;top:823.2px;font-size:27px;line-height:40px;color:#3fae20;font-weight:normal;">启用</div>
<div class="t" style="left:2424px;top:823.2px;font-size:30px;line-height:40px;color:#424242;font-weight:normal;">010000003</div>
<div class="t" style="left:2699px;top:823.2px;font-size:29px;line-height:40px;color:#424242;font-weight:normal;">安全审计员</div>
<div class="t" style="left:3267px;top:823.2px;font-size:30px;line-height:40px;color:#424242;font-weight:normal;width:200px;text-align:center">10</div>
<div class="t" style="left:3620px;top:823.2px;font-size:29px;line-height:40px;color:#4b56d2;font-weight:normal;">编辑</div>
<div class="a" style="left:1123px;top:913px;width:32px;height:32px;background:#fff;box-sizing:border-box;border:2px solid #e1e9f0;border-radius:3px"></div>
<div class="t c30" style="left:1230px;top:903.6px;font-size:30px;line-height:40px;color:#424242;font-weight:normal;width:0;overflow:visible">7</div>
<div class="t" style="left:1318px;top:903.6px;font-size:29px;line-height:40px;color:#424242;font-weight:normal;">办公室</div>
<div class="t" style="left:1594px;top:903.6px;font-size:30px;line-height:40px;color:#424242;font-weight:normal;">admin</div>
<div class="a" style="left:1952px;top:903px;width:61px;height:44px;background:#f6ffed;box-sizing:border-box;border:2px solid #b4e890;border-radius:3px"></div>
<div class="t" style="left:1968px;top:903.6px;font-size:27px;line-height:40px;color:#3fae20;font-weight:normal;">否</div>
<div class="a" style="left:2213px;top:903px;width:92px;height:44px;background:#f6ffed;box-sizing:border-box;border:2px solid #b4e890;border-radius:3px"></div>
<div class="t" style="left:2230px;top:903.6px;font-size:27px;line-height:40px;color:#3fae20;font-weight:normal;">启用</div>
<div class="t" style="left:2424px;top:903.6px;font-size:29px;line-height:40px;color:#424242;font-weight:normal;">生产库删除</div>
<div class="t" style="left:2699px;top:903.6px;font-size:29px;line-height:40px;color:#424242;font-weight:normal;">丁二郎</div>
<div class="t" style="left:3267px;top:903.6px;font-size:30px;line-height:40px;color:#424242;font-weight:normal;width:200px;text-align:center">10</div>
<div class="t" style="left:3620px;top:903.6px;font-size:29px;line-height:40px;color:#4b56d2;font-weight:normal;">编辑</div>
<div class="a" style="left:1123px;top:993px;width:32px;height:32px;background:#fff;box-sizing:border-box;border:2px solid #e1e9f0;border-radius:3px"></div>
<div class="t c30" style="left:1230px;top:984.1px;font-size:30px;line-height:40px;color:#424242;font-weight:normal;width:0;overflow:visible">8</div>
<div class="t" style="left:1318px;top:984.1px;font-size:29px;line-height:40px;color:#424242;font-weight:normal;">办公室</div>
<div class="t" style="left:1594px;top:984.1px;font-size:30px;line-height:40px;color:#424242;font-weight:normal;">dingsl</div>
<div class="a" style="left:1952px;top:983px;width:61px;height:44px;background:#f6ffed;box-sizing:border-box;border:2px solid #b4e890;border-radius:3px"></div>
<div class="t" style="left:1968px;top:984.1px;font-size:27px;line-height:40px;color:#3fae20;font-weight:normal;">否</div>
<div class="a" style="left:2213px;top:983px;width:92px;height:44px;background:#f6ffed;box-sizing:border-box;border:2px solid #b4e890;border-radius:3px"></div>
<div class="t" style="left:2230px;top:984.1px;font-size:27px;line-height:40px;color:#3fae20;font-weight:normal;">启用</div>
<div class="t" style="left:2424px;top:984.1px;font-size:29px;line-height:40px;color:#424242;font-weight:normal;"></div>
<div class="t" style="left:2699px;top:984.1px;font-size:29px;line-height:40px;color:#424242;font-weight:normal;">丁三郎</div>
<div class="t" style="left:3267px;top:984.1px;font-size:30px;line-height:40px;color:#424242;font-weight:normal;width:200px;text-align:center">99</div>
<div class="t" style="left:3620px;top:984.1px;font-size:29px;line-height:40px;color:#4b56d2;font-weight:normal;">编辑</div>
<div class="a" style="left:1123px;top:1074px;width:32px;height:32px;background:#fff;box-sizing:border-box;border:2px solid #e1e9f0;border-radius:3px"></div>
<div class="t c30" style="left:1230px;top:1064.5px;font-size:30px;line-height:40px;color:#424242;font-weight:normal;width:0;overflow:visible">9</div>
<div class="t" style="left:1318px;top:1064.5px;font-size:29px;line-height:40px;color:#424242;font-weight:normal;">游客</div>
<div class="t" style="left:1594px;top:1064.5px;font-size:30px;line-height:40px;color:#424242;font-weight:normal;">guest</div>
<div class="a" style="left:1952px;top:1064px;width:61px;height:44px;background:#f6ffed;box-sizing:border-box;border:2px solid #b4e890;border-radius:3px"></div>
<div class="t" style="left:1968px;top:1064.5px;font-size:27px;line-height:40px;color:#3fae20;font-weight:normal;">否</div>
<div class="a" style="left:2213px;top:1064px;width:92px;height:44px;background:#f6ffed;box-sizing:border-box;border:2px solid #b4e890;border-radius:3px"></div>
<div class="t" style="left:2230px;top:1064.5px;font-size:27px;line-height:40px;color:#3fae20;font-weight:normal;">启用</div>
<div class="t" style="left:2424px;top:1064.5px;font-size:29px;line-height:40px;color:#424242;font-weight:normal;"></div>
<div class="t" style="left:2699px;top:1064.5px;font-size:29px;line-height:40px;color:#424242;font-weight:normal;">Guest</div>
<div class="t" style="left:3267px;top:1064.5px;font-size:30px;line-height:40px;color:#424242;font-weight:normal;width:200px;text-align:center">1000</div>
<div class="t" style="left:3620px;top:1064.5px;font-size:29px;line-height:40px;color:#4b56d2;font-weight:normal;">编辑</div>
</body></html>
